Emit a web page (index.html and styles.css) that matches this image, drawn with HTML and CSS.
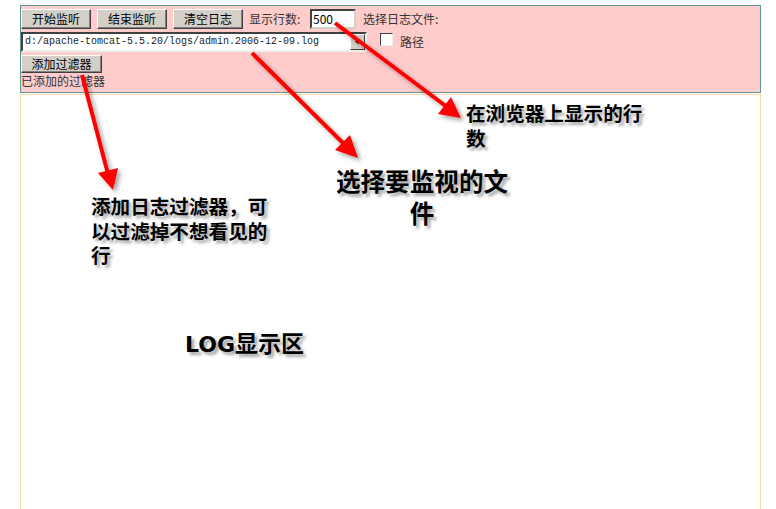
FILE: index.html
```html
<!DOCTYPE html>
<html lang="zh-CN">
<head>
  <meta charset="UTF-8" />
  <title>日志监视</title>
  <link rel="stylesheet" href="styles.css">
</head>
<body>

  <div class="page">
    <div class="toolbar">
      <div class="row">
        <button class="btn">开始监听</button>
        <button class="btn">结束监听</button>
        <button class="btn">清空日志</button>
        <span class="label lines-label">显示行数:</span>
        <div class="text-input">500</div>
        <span class="label file-label">选择日志文件:</span>
      </div>
      <div class="row">
        <div class="select">
          <span class="select-text">d:/apache-tomcat-5.5.20/logs/admin.2006-12-09.log</span>
          <span class="select-btn"><span class="caret"></span></span>
        </div>
        <span class="checkbox"></span>
        <span class="label path-label">路径</span>
      </div>
      <div class="row row-small">
        <button class="btn btn-filter">添加过滤器</button>
      </div>
      <div class="filters">已添加的过滤器</div>
    </div>

    <div class="log-area"></div>
  </div>

  <!-- annotations over the screenshot -->
  <div class="note note-lines">在浏览器上显示的行<br>数</div>
  <div class="note note-file">选择要监视的文<br>件</div>
  <div class="note note-filter">添加日志过滤器，可<br>以过滤掉不想看见的<br>行</div>
  <div class="note note-log"><span class="latin">LOG</span>显示区</div>

  <svg class="arrows" width="776" height="509" viewBox="0 0 776 509">
    <defs>
      <filter id="shadow" x="-20%" y="-20%" width="140%" height="140%">
        <feDropShadow dx="3" dy="3" stdDeviation="2" flood-color="#000" flood-opacity="0.35"/>
      </filter>
    </defs>
    <g filter="url(#shadow)" fill="#ff0000" stroke="#ff0000">
      <line x1="82" y1="75" x2="108" y2="174" stroke-width="4"/>
      <polygon points="113,190 98,173 118,168" stroke="none"/>

      <line x1="252" y1="53" x2="345" y2="145" stroke-width="4"/>
      <polygon points="358,158 335,150 350,135" stroke="none"/>

      <line x1="335" y1="23" x2="447" y2="107" stroke-width="4"/>
      <polygon points="461,118 438,114 451,97" stroke="none"/>
    </g>
  </svg>

</body>
</html>
```

FILE: styles.css
```css
* {
  margin: 0;
  padding: 0;
  box-sizing: border-box;
}

html, body {
  height: 100%;
  overflow: hidden;
}

body {
  position: relative;
  background: #fff;
  font-family: "Noto Sans CJK SC", sans-serif;
  font-size: 12px;
  color: #000;
}

.page {
  width: 741px;
  padding: 5px 0 0 20px;
  box-sizing: content-box;
}

.toolbar {
  border: 1px solid #5f9690;
  background: #ffcccc;
  padding: 3px 0 4px 0;
}

.row {
  display: flex;
  align-items: center;
  height: 20px;
  margin-bottom: 3px;
}

.row-small {
  height: 18px;
  margin-bottom: 0;
}

.btn {
  width: 70px;
  height: 20px;
  margin-right: 6px;
  background: #d4d0c8;
  border: 1px solid;
  border-color: #fff #404040 #404040 #fff;
  box-shadow: inset -1px -1px #808080;
  font-family: "Noto Sans CJK SC", sans-serif;
  font-size: 12px;
  line-height: 16px;
  color: #000;
}

.btn-filter {
  width: 81px;
  height: 18px;
  line-height: 14px;
}

.label {
  color: #333;
  white-space: nowrap;
  line-height: 20px;
}

.lines-label {
  width: 61px;
}

.text-input {
  width: 46px;
  height: 20px;
  background: #fff;
  border: 2px solid;
  border-color: #404040 #d4d0c8 #d4d0c8 #404040;
  padding-left: 1px;
  line-height: 16px;
  font-size: 12px;
}

.file-label {
  margin-left: 7px;
}

.select {
  display: flex;
  width: 346px;
  height: 20px;
  background: #fff;
  border: 2px solid;
  border-color: #404040 #eee #eee #404040;
}

.select-text {
  flex: 1;
  padding-left: 2px;
  font-family: "Liberation Mono", monospace;
  font-size: 10px;
  line-height: 16px;
  color: #222;
  white-space: nowrap;
  overflow: hidden;
}

.select-btn {
  width: 15px;
  height: 16px;
  background: #d4d0c8;
  border: 1px solid;
  border-color: #fff #404040 #404040 #fff;
  display: flex;
  align-items: center;
  justify-content: center;
}

.caret {
  width: 0;
  height: 0;
  border-left: 3px solid transparent;
  border-right: 3px solid transparent;
  border-top: 3px solid #000;
}

.checkbox {
  width: 13px;
  height: 13px;
  margin: 1px 7px 0 13px;
  background: #fff;
  border: 1px solid;
  border-color: #404040 #eee #eee #404040;
  align-self: flex-start;
}

.path-label {
  font-size: 12px;
}

.filters {
  color: #333;
  line-height: 15px;
  height: 15px;
}

.log-area {
  margin-top: 1px;
  height: 440px;
  border: 1px solid #f3d9a4;
  background: #fff;
}

/* notes sit on top of the screenshot */
.note {
  position: absolute;
  font-family: "Noto Sans CJK SC", sans-serif;
  font-weight: bold;
  color: #000;
  text-shadow: 3px 3px 3px rgba(0, 0, 0, 0.35);
  white-space: nowrap;
}

.note-lines {
  left: 466px;
  top: 100px;
  font-size: 19.6px;
  line-height: 25px;
}

.note-file {
  left: 332px;
  top: 164px;
  width: 180px;
  text-align: center;
  font-size: 24.6px;
  line-height: 32px;
}

.note-filter {
  left: 91px;
  top: 194px;
  font-size: 19.6px;
  line-height: 24.5px;
}

.note-log {
  left: 185px;
  top: 327px;
  font-size: 23px;
  line-height: 30px;
}

.latin {
  font-family: "DejaVu Sans", sans-serif;
  font-size: 22px;
}

.arrows {
  position: absolute;
  left: 0;
  top: 0;
  pointer-events: none;
}
```
